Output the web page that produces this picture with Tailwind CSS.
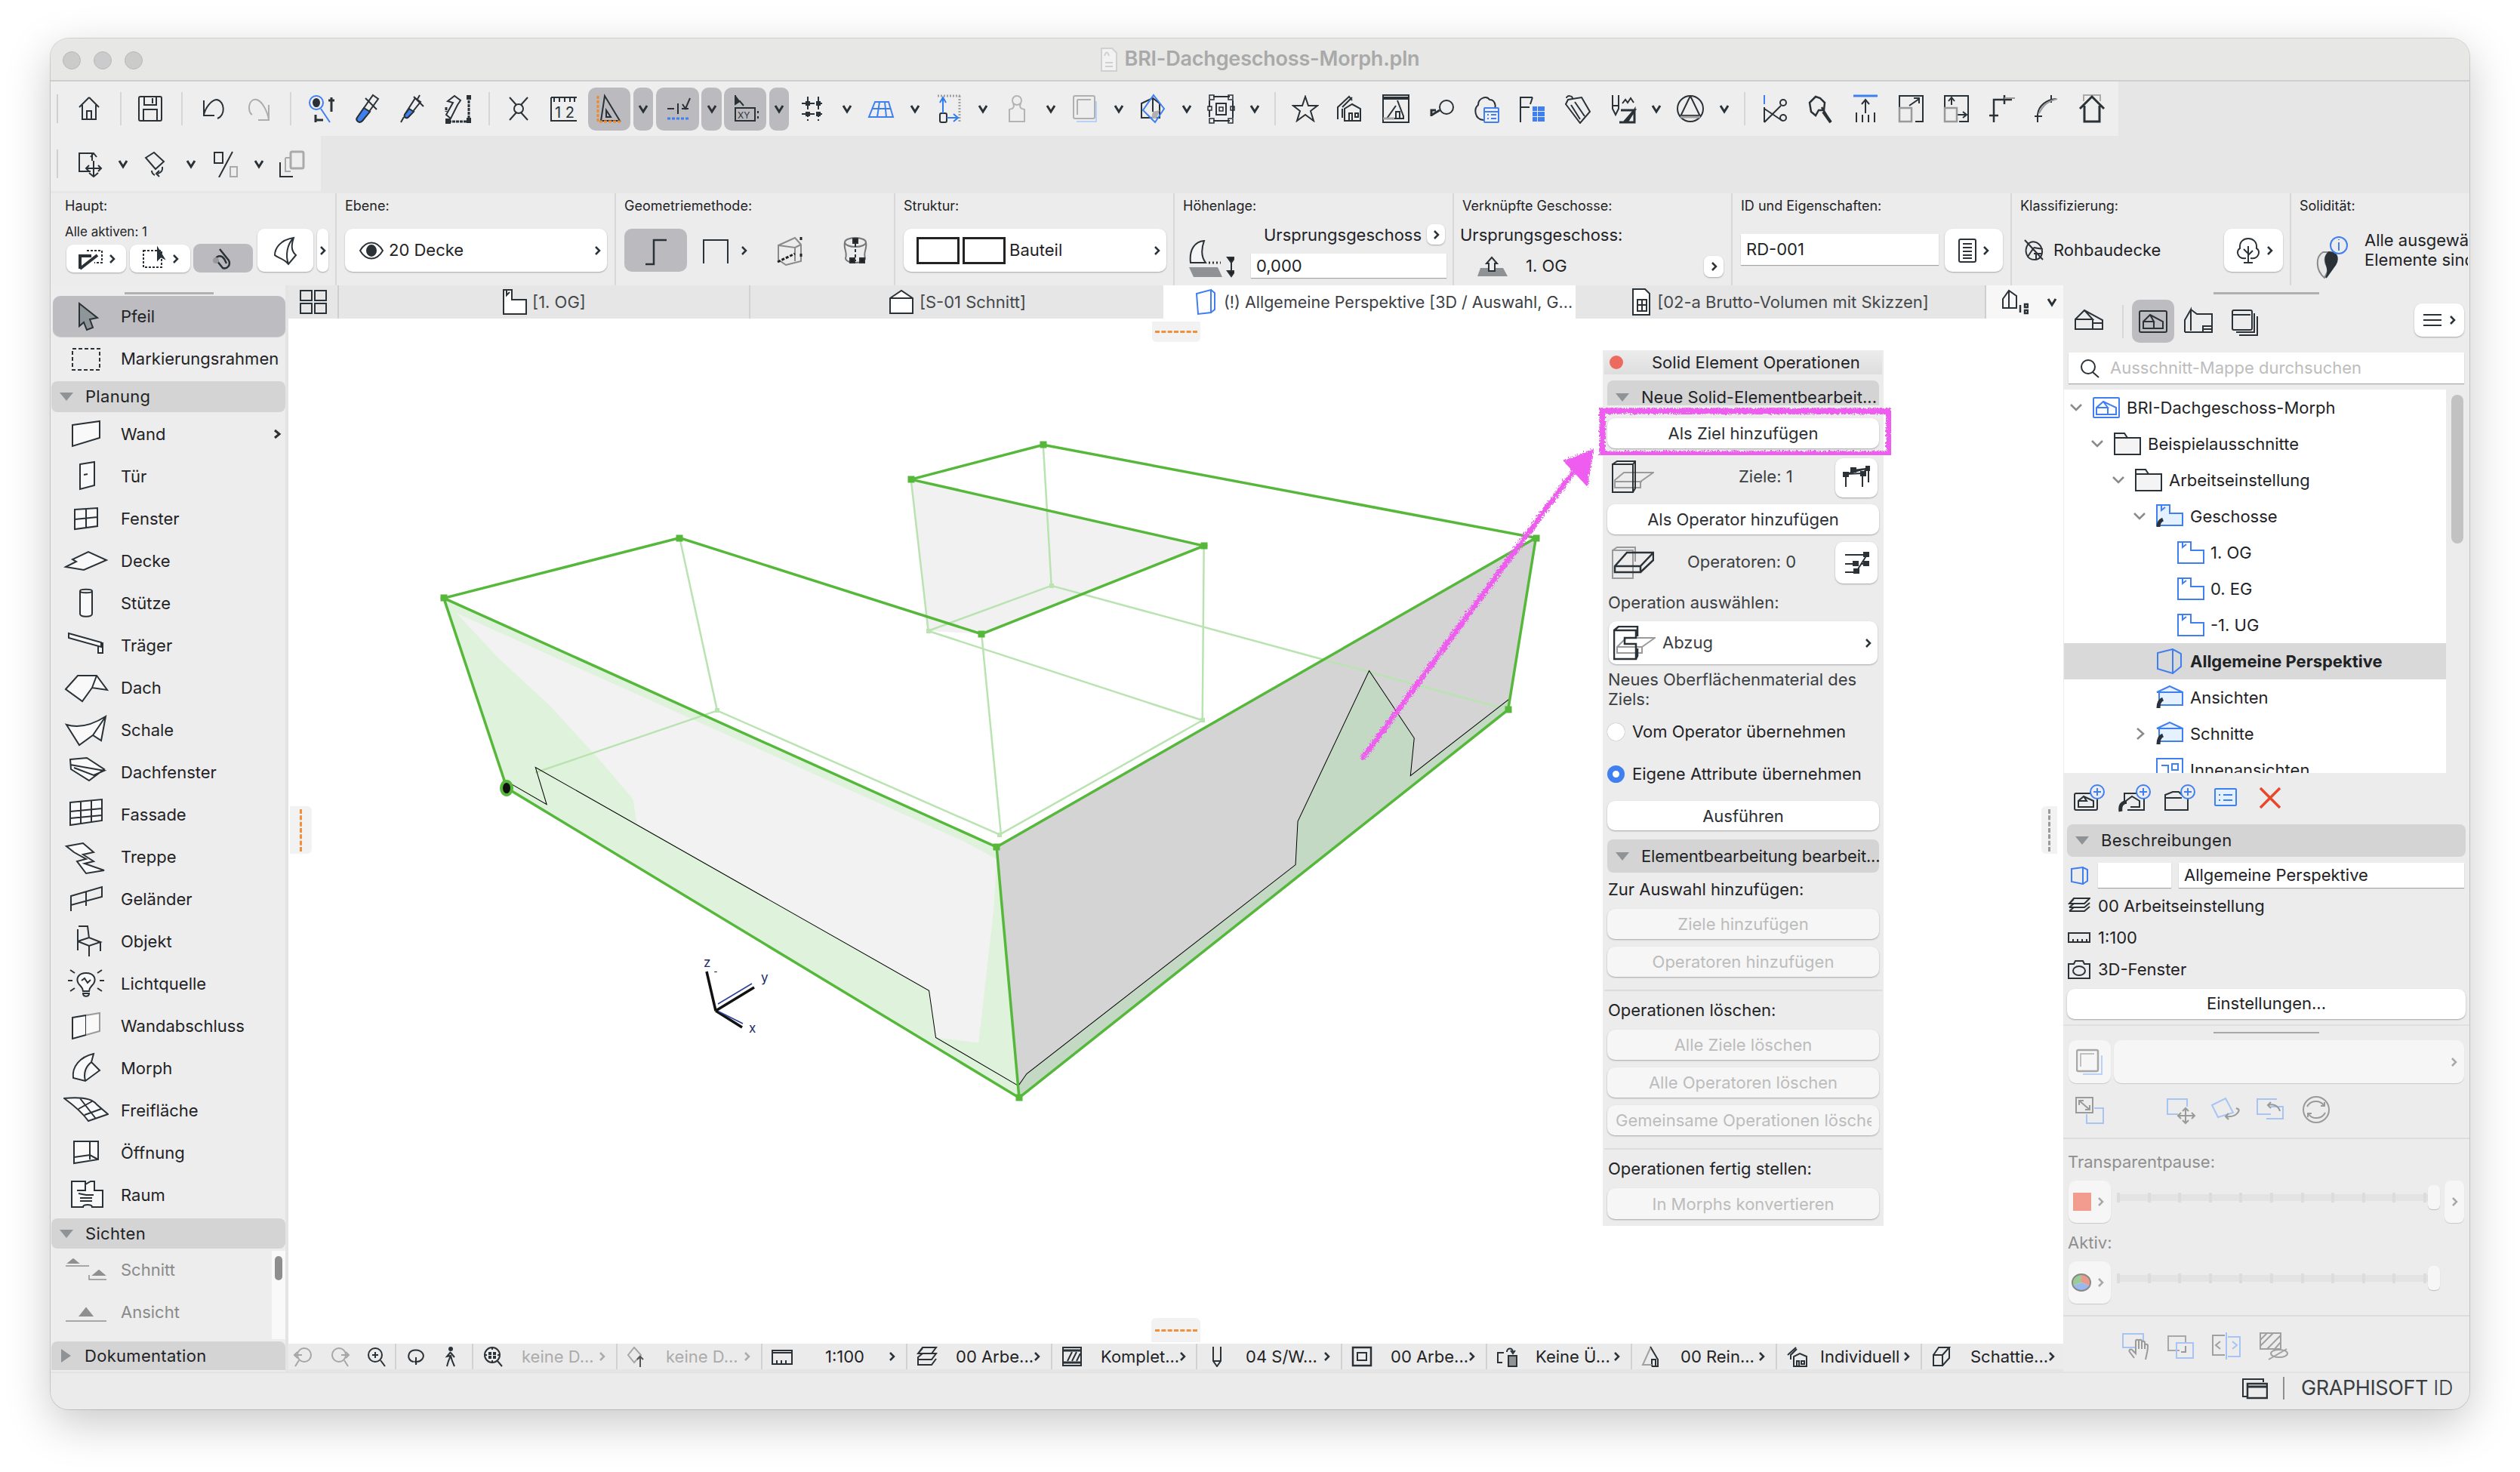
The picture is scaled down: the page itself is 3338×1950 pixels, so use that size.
<!DOCTYPE html>
<html lang="de">
<head>
<meta charset="UTF-8">
<title>BRI-Dachgeschoss-Morph.pln</title>
<script src="https://cdn.jsdelivr.net/npm/@tailwindcss/browser@4"></script>
</head>
<body class="bg-white w-[3338px] h-[1950px] overflow-hidden [font-family:Inter,'Liberation_Sans',sans-serif] text-[#1f2326] text-[22px]">
<div class="ml-[67px] mt-[51px] w-[3204px] h-[1816px] rounded-[24px] overflow-hidden flex flex-col bg-[#e6e6e6] shadow-[0_18px_60px_rgba(0,0,0,0.22),0_0_0_1px_rgba(0,0,0,0.14)] [&_svg]:fill-none [&_svg]:stroke-[#2a3238] [&_svg]:stroke-2 [&_svg]:shrink-0">

  <!-- title bar -->
  <div class="relative h-[57px] bg-[#e7e7e5] border-b-2 border-[#cfcfcf] flex items-center justify-center gap-[10px] shrink-0">
    <div class="absolute left-[16px] top-[17px] flex gap-[17px]">
      <div class="size-[24px] rounded-full bg-[#cbcbcb] border border-[#b9b9b9]"></div>
      <div class="size-[24px] rounded-full bg-[#cbcbcb] border border-[#b9b9b9]"></div>
      <div class="size-[24px] rounded-full bg-[#cbcbcb] border border-[#b9b9b9]"></div>
    </div>
    <svg class="w-[22px] h-[32px]" viewBox="0 0 22 32"><g stroke="#d0d0d0"><path d="M1 1H15L21 7V31H1Z" fill="#f2f2f2"/><path d="M5 11C7 5 9 5 11 11M6 20h10M6 25h10"/></g></svg>
    <span class="text-[#a9a9a9] font-semibold text-[27px] tracking-[-0.2px]">BRI-Dachgeschoss-Morph.pln</span>
  </div>

  <!-- main toolbar -->
  <div class="h-[72px] w-[2739px] bg-[#eeeeee] flex items-center shrink-0 [&>div]:w-[60px] [&>div]:flex [&>div]:justify-center [&>span]:w-[30px] [&>span]:flex [&>span]:justify-center">
    <i class="w-[2px] h-[38px] bg-[#cfcfcf] ml-[8px] mr-[11px]"></i>
    <div><svg class="size-9" viewBox="0 0 36 36"><path d="M18 3L5 16M18 3L31 16M9 13V32H27V13M15 32V21H21V32"/></svg></div>
    <i class="w-[2px] h-[44px] bg-[#d6d6d6] ml-[11px] mr-[8px]"></i>
    <div><svg class="size-9" viewBox="0 0 36 36"><rect x="3" y="2" width="30" height="32" rx="2"/><path d="M10 2V13H26V2M21 4V11M9 34V19H27V34"/></svg></div>
    <i class="w-[2px] h-[44px] bg-[#d6d6d6] ml-[11px] mr-[11px]"></i>
    <div><svg class="size-9" viewBox="0 0 36 36"><path d="M5 7V27H19M5 27C6 18 15 6 22 6C33 8 34 27 23 31"/></svg></div>
    <div><svg class="size-9" viewBox="0 0 36 36"><g stroke="#adadad"><path d="M31 13V33H17M31 33C30 24 23 8 15 6C4 4 2 22 9 26"/></g></svg></div>
    <i class="w-[2px] h-[44px] bg-[#d6d6d6] ml-[11px] mr-[10px]"></i>
    <div><svg class="size-10" viewBox="0 0 40 40"><circle cx="13" cy="12" r="9" stroke="#3f7ff0"/><ellipse cx="13" cy="12" rx="4" ry="5" fill="#2a3238"/><path d="M19 20L31 38" stroke="#3f7ff0"/><path d="M33 5V24M29 9H37M12 28V38M12 35H22" stroke-width="3"/></svg></div>
    <div><svg class="size-10" viewBox="0 0 40 40"><path d="M28 2L35 7L14 36C10 40 5 36 7 32Z"/><path d="M7 32L16 19L24 24L14 36C10 40 5 36 7 32Z" fill="#3f7ff0"/><path d="M18 6L33 21"/></svg></div>
    <div><svg class="size-10" viewBox="0 0 40 40"><path d="M24 6L31 11L15 31C12 34 9 31 10 28Z"/><path d="M10 28L16 20L22 24L15 31C12 34 9 31 10 28Z" fill="#3f7ff0"/><path d="M9 31L5 38M22 4L35 17M30 2L26 9"/></svg></div>
    <div><svg class="size-10" viewBox="0 0 40 40"><path d="M7 10L16 3L24 9L20 15L11 33L5 28L14 12Z"/><path d="M35 4V36M8 37H35M5 18V24" stroke-dasharray="4 1" stroke-width="3"/><rect x="33" y="3" width="4" height="4" fill="#2a3238"/><rect x="33" y="33" width="4" height="5" fill="#2a3238"/><rect x="5" y="34" width="5" height="5" fill="#2a3238"/></svg></div>
    <i class="w-[2px] h-[44px] bg-[#d6d6d6] ml-[11px] mr-[8px]"></i>
    <div><svg class="size-9" viewBox="0 0 36 36"><circle cx="18" cy="18" r="6"/><path d="M6 3L15 13M30 3L21 13M6 33L15 23M30 33L21 23"/></svg></div>
    <div><svg class="size-9" viewBox="0 0 36 36"><path d="M1 3H35M5 3V9M12 3V9M19 3V9M26 3V9M32 3V9M1 3V34H35"/><text x="6" y="30" font-size="20" font-family="Inter" fill="#2a3238" stroke="none">1 2</text></svg></div>
    <div class="!w-[56px] h-[57px] ml-[2px] rounded-[10px] bg-[#bbbbbf] items-center"><svg class="size-10" viewBox="0 0 40 40"><path d="M14 3L34 36H9Z M16 22V31H22Z"/><path d="M5 3V37H35" stroke="#ee8a2e" stroke-dasharray="4 2" stroke-width="3"/></svg></div>
    <span class="!w-[26px] h-[57px] ml-[4px] rounded-[9px] bg-[#bbbbbf] items-center"><svg class="size-[14px]" viewBox="0 0 14 14"><path d="M2 3L7 11L12 3" stroke-width="3"/></svg></span>
    <div class="!w-[57px] h-[57px] ml-[4px] rounded-[10px] bg-[#bbbbbf] items-center"><svg class="size-10" viewBox="0 0 40 40"><path d="M6 20H15M25 20H34M20 13V27M26 14L30 20L36 6"/><path d="M6 33H34" stroke="#3f7ff0" stroke-dasharray="4 2" stroke-width="3"/></svg></div>
    <span class="!w-[27px] h-[57px] ml-[3px] rounded-[9px] bg-[#bbbbbf] items-center"><svg class="size-[14px]" viewBox="0 0 14 14"><path d="M2 3L7 11L12 3" stroke-width="3"/></svg></span>
    <div class="!w-[56px] h-[57px] ml-[3px] rounded-[10px] bg-[#bbbbbf] items-center"><svg class="size-10" viewBox="0 0 40 40"><path d="M7 2L7 14L13 10L18 16" fill="#2a3238"/><rect x="7" y="19" width="26" height="17"/><text x="10" y="33" font-size="12" font-family="Inter" fill="#2a3238" stroke="none">XY</text><path d="M37 23V26M37 30V33"/></svg></div>
    <span class="!w-[26px] h-[57px] ml-[4px] rounded-[9px] bg-[#bbbbbf] items-center"><svg class="size-[14px]" viewBox="0 0 14 14"><path d="M2 3L7 11L12 3" stroke-width="3"/></svg></span>
    <div class="ml-[2px]"><svg class="size-9" viewBox="0 0 36 36"><path d="M3 11H33M3 25H33M11 2V34M25 2V34" stroke-dasharray="7 3"/><path d="M9 9h4v4h-4zM23 9h4v4h-4zM9 23h4v4h-4zM23 23h4v4h-4z" fill="#2a3238"/></svg></div>
    <span><svg class="size-[14px]" viewBox="0 0 14 14"><path d="M2 3L7 11L12 3" stroke-width="3"/></svg></span>
    <div><svg class="size-9" viewBox="0 0 36 36"><g stroke="#3f7ff0"><path d="M10 9H28L34 29H2Z M16 9L13 29M23 9L25 29M6 18H31"/></g></svg></div>
    <span><svg class="size-[14px]" viewBox="0 0 14 14"><path d="M2 3L7 11L12 3" stroke-width="3"/></svg></span>
    <div><svg class="size-10" viewBox="0 0 40 40"><path d="M5 3H35M34 3V38" stroke="#a0a0a0" stroke-dasharray="2 2" stroke-width="3"/><rect x="8" y="26" width="9" height="12" rx="2"/><path d="M12 26V6M8 12L12 5L16 12M17 32H30M26 27L32 32L26 37" stroke="#2f7df0" fill="none"/></svg></div>
    <span><svg class="size-[14px]" viewBox="0 0 14 14"><path d="M2 3L7 11L12 3" stroke-width="3"/></svg></span>
    <div><svg class="size-10" viewBox="0 0 40 40"><g stroke="#b3b3b3"><circle cx="20" cy="9" r="6"/><path d="M15 13C17 17 16 20 10 21V37H30V21C24 20 23 17 25 13"/></g></svg></div>
    <span><svg class="size-[14px]" viewBox="0 0 14 14"><path d="M2 3L7 11L12 3" stroke-width="3"/></svg></span>
    <div><svg class="size-10" viewBox="0 0 40 40"><rect x="5" y="3" width="28" height="30" rx="2" stroke="#b0b0b0"/><path d="M10 8H28M10 8V28" stroke="#b0b0b0"/><path d="M9 37H35V10" stroke="#b9d0f7"/></svg></div>
    <span><svg class="size-[14px]" viewBox="0 0 14 14"><path d="M2 3L7 11L12 3" stroke-width="3"/></svg></span>
    <div><svg class="size-10" viewBox="0 0 40 40"><path d="M5 13L20 6L29 13V32H5Z M20 6V24"/><path d="M20 24L29 22L25 33H18Z" fill="#b0b0b0" stroke="none"/><path d="M21 2L35 20L23 38L7 22Z" stroke="#3f7ff0"/></svg></div>
    <span><svg class="size-[14px]" viewBox="0 0 14 14"><path d="M2 3L7 11L12 3" stroke-width="3"/></svg></span>
    <div><svg class="size-10" viewBox="0 0 40 40"><path d="M10 4H32M10 36H32M5 9V18M5 22V31M36 9V32M14 13H27V28H14Z"/><path d="M5 2h6v6h-6zM30 2h6v6h-6zM5 33h6v6h-6zM30 33h6v6h-6zM3 17h5v5h-5zM33 17h5v5h-5zM18 18h5v5h-5z" stroke-width="1.5"/></svg></div>
    <span><svg class="size-[14px]" viewBox="0 0 14 14"><path d="M2 3L7 11L12 3" stroke-width="3"/></svg></span>
    <i class="w-[2px] h-[44px] bg-[#d6d6d6] ml-[11px] mr-[9px]"></i>
    <div><svg class="size-9" viewBox="0 0 36 36"><path d="M18 2L22 14H34L25 21L29 34L18 26L7 34L11 21L2 14H14Z"/></svg></div>
    <div><svg class="size-10" viewBox="0 0 40 40"><path d="M3 34V18L18 4L22 9M9 20V32M9 18L22 5"/><path d="M12 36V20L22 14L33 20V36Z"/><path d="M18 36V26H22V36M26 26H30V31H26Z"/></svg></div>
    <div><svg class="size-10" viewBox="0 0 40 40"><rect x="3" y="2" width="34" height="36"/><path d="M3 6H37" stroke-width="4"/><path d="M22 9L30 30V33H8L20 16" /><path d="M20 33V24H25V33"/><path d="M3 33H18" stroke="#a0a0a0" stroke-width="3"/></svg></div>
    <div><svg class="size-9" viewBox="0 0 36 36"><circle cx="25" cy="16" r="9"/><path d="M16 20L6 26M11 20H5V28" stroke-width="3"/></svg></div>
    <div><svg class="size-10" viewBox="0 0 40 40"><path d="M16 35C4 34 3 20 9 15C9 6 20 2 24 8C30 8 33 14 31 20"/><rect x="17" y="19" width="19" height="19" rx="1" stroke="#3f7ff0"/><path d="M17 24H36M21 28H23M26 28H33M21 33H23M26 33H33" stroke="#3f7ff0"/></svg></div>
    <div><svg class="size-10" viewBox="0 0 40 40"><path d="M5 38V5H21M5 18H17M21 5L18 14"/><path d="M22 18h4v4h-4zM29 18h7v4h-7zM22 25h4v4h-4zM29 25h7v4h-7zM22 32h4v4h-4zM29 32h7v4h-7z" fill="#3f7ff0" stroke="#3f7ff0"/></svg></div>
    <div><svg class="size-10" viewBox="0 0 40 40"><path d="M8 8L26 5L37 24L24 39L5 14Z M12 15L24 34M17 11L30 30M6 6C6 2 14 2 14 7"/></svg></div>
    <div><svg class="size-10" viewBox="0 0 40 40"><path d="M7 2V20L11 28L15 20V2M7 16H15"/><path d="M20 13L24 8L27 12L31 6L35 12" stroke="#2a3238"/><path d="M18 22H36L22 38M36 22L26 38H36ZM16 38H36" stroke-width="3"/></svg></div>
    <span><svg class="size-[14px]" viewBox="0 0 14 14"><path d="M2 3L7 11L12 3" stroke-width="3"/></svg></span>
    <div><svg class="size-10" viewBox="0 0 40 40"><circle cx="20" cy="20" r="17"/><path d="M20 3L33 30M20 3L7 30M5 29H35"/><path d="M7 31H33" stroke="#a0a0a0" stroke-width="3"/></svg></div>
    <span><svg class="size-[14px]" viewBox="0 0 14 14"><path d="M2 3L7 11L12 3" stroke-width="3"/></svg></span>
    <i class="w-[2px] h-[44px] bg-[#d6d6d6] ml-[11px] mr-[9px]"></i>
    <div><svg class="size-10" viewBox="0 0 40 40"><path d="M6 2V14" stroke="#3f7ff0"/><path d="M6 18V38M6 20L30 36M6 38L28 16"/><circle cx="31" cy="12" r="4"/><circle cx="31" cy="32" r="4"/></svg></div>
    <div><svg class="size-10" viewBox="0 0 40 40"><path d="M14 4L6 12L8 24L14 29L18 22L25 22L26 12L20 6Z M22 18L34 38" stroke-width="2.5"/><path d="M24 24L34 38" stroke-width="4"/></svg></div>
    <div><svg class="size-10" viewBox="0 0 40 40"><path d="M4 3H36" stroke="#3f7ff0" stroke-width="3"/><path d="M20 9V26M15 14L20 8L25 14M8 25V38M16 28V38M24 28V38M32 25V38"/></svg></div>
    <div><svg class="size-10" viewBox="0 0 40 40"><path d="M5 18V3H36V37H26M18 16L31 7M24 6H31V13"/><rect x="5" y="19" width="16" height="18" stroke="#999" stroke-width="2.5"/></svg></div>
    <div><svg class="size-10" viewBox="0 0 40 40"><path d="M5 18V3H36V37H24M14 15V6M10 10L14 5L18 10M22 28H33M29 24L34 28L29 32"/><rect x="5" y="19" width="16" height="18" stroke="#999" stroke-width="2.5"/></svg></div>
    <div><svg class="size-10" viewBox="0 0 40 40"><path d="M10 38V8H34M24 2V14M4 29H16" stroke-width="2.5"/><path d="M24 6H38" stroke="#999"/></svg></div>
    <div><svg class="size-10" viewBox="0 0 40 40"><path d="M8 38V28C9 16 20 8 32 7M26 2V12M4 30H14" stroke-width="2"/><path d="M10 26C16 14 22 10 34 7" stroke="#999"/></svg></div>
    <div><svg class="size-10" viewBox="0 0 40 40"><path d="M9 10V2H31V10" stroke="#aaa"/><path d="M4 20L20 4L36 20M10 16V37H30V16" stroke-width="3"/></svg></div>
  </div>

  <!-- second toolbar -->
  <div class="h-[73px] w-[358px] bg-[#eeeeee] flex items-center shrink-0">
    <i class="w-[2px] h-[38px] bg-[#cfcfcf] ml-[8px]"></i>
    <div class="ml-[25px] w-[36px]"><svg class="size-9" viewBox="0 0 36 36"><path d="M18 28H3V4H20V14" /><path d="M22 14V34M12 24H32M18 9L22 4L26 9" transform="translate(0 0)"/><path d="M16 30L22 35L28 30M16 20L12 24L16 28M28 20L32 24L28 28"/></svg></div>
    <svg class="size-[14px] ml-[18px]" viewBox="0 0 14 14"><path d="M2 3L7 11L12 3" stroke-width="3"/></svg>
    <svg class="size-9 ml-[19px]" viewBox="0 0 36 36"><path d="M4 10L15 3L28 15L17 25Z"/><path d="M26 22C27 28 24 30 20 31M22 35L18 31L22 27M12 27C12 30 14 32 16 33" stroke-width="2"/></svg>
    <svg class="size-[14px] ml-[21px]" viewBox="0 0 14 14"><path d="M2 3L7 11L12 3" stroke-width="3"/></svg>
    <svg class="size-9 ml-[21px]" viewBox="0 0 36 36"><path d="M27 2L9 36"/><rect x="3" y="3" width="11" height="14"/><rect x="24" y="22" width="9" height="13" stroke="#aaa"/></svg>
    <svg class="size-[14px] ml-[19px]" viewBox="0 0 14 14"><path d="M2 3L7 11L12 3" stroke-width="3"/></svg>
    <svg class="size-9 ml-[18px]" viewBox="0 0 36 36"><rect x="17" y="2" width="17" height="22" rx="2" stroke="#aaa" stroke-width="3"/><path d="M10 10H16M10 10V28H17" stroke="#aaa"/><path d="M3 16V35H20"/></svg>
  </div>

  <!-- info box -->
  <div class="h-[122px] mt-[3px] flex bg-[#ececec] shrink-0 text-[18px] [&>section]:w-[370px] [&>section]:relative [&>section]:border-r-2 [&>section]:border-[#d8d8d8] [&>section]:pl-[11px]">
    <section class="!w-[379px] !pl-[19px]">
      <div class="mt-[5px] leading-[24px]">Haupt:</div>
      <div class="mt-[10px] text-[17px] leading-[24px]">Alle aktiven: 1</div>
      <div class="absolute left-[21px] top-[68px] w-[79px] h-[37px] bg-white rounded-[9px] shadow-[0_1px_2px_rgba(0,0,0,0.3)] flex items-center justify-center gap-[7px]"><svg class="size-[34px]" viewBox="0 0 34 34"><path d="M12 6H32V22H22" stroke-dasharray="3 2"/><path d="M3 30V13H18M3 30L26 12" stroke-width="4"/></svg><svg class="w-[9px] h-[14px]" viewBox="0 0 9 14"><path d="M2 2L7 7L2 12" stroke-width="2.5"/></svg></div>
      <div class="absolute left-[105px] top-[68px] w-[80px] h-[37px] bg-white rounded-[9px] shadow-[0_1px_2px_rgba(0,0,0,0.3)] flex items-center justify-center gap-[7px]"><svg class="size-[34px]" viewBox="0 0 34 34"><rect x="3" y="6" width="24" height="22" stroke-dasharray="3 2"/><path d="M22 3V18L26 14L30 16Z" fill="#2a3238"/></svg><svg class="w-[9px] h-[14px]" viewBox="0 0 9 14"><path d="M2 2L7 7L2 12" stroke-width="2.5"/></svg></div>
      <div class="absolute left-[189px] top-[67px] w-[79px] h-[38px] bg-[#bbbbbf] rounded-[9px] flex items-center justify-center"><svg class="size-[34px]" viewBox="0 0 34 34"><path d="M12 5L24 20C27 26 22 32 16 30L8 20C5 14 14 12 18 18L21 24" stroke-width="2.5"/><circle cx="7" cy="20" r="4" fill="#999" stroke="none"/></svg></div>
      <div class="absolute left-[274px] top-[47px] w-[74px] h-[57px] bg-white rounded-[9px] shadow-[0_1px_2px_rgba(0,0,0,0.3)] flex items-center justify-center"><svg class="size-10" viewBox="0 0 40 40"><path d="M6 26C6 18 12 6 31 3C28 12 27 20 34 26L24 38C18 30 10 30 6 26Z M31 3C22 12 20 26 24 38"/></svg></div>
      <div class="absolute left-[353px] top-[47px] w-[15px] h-[57px] bg-white rounded-[7px] shadow-[0_1px_2px_rgba(0,0,0,0.3)] flex items-center justify-center"><svg class="w-[9px] h-[14px]" viewBox="0 0 9 14"><path d="M2 2L7 7L2 12" stroke-width="2.5"/></svg></div>
    </section>
    <section>
      <div class="mt-[5px] leading-[24px] mb-[18px]">Ebene:</div>
      <div class="w-[347px] h-[57px] bg-white rounded-[10px] shadow-[0_1px_2px_rgba(0,0,0,0.3)] flex items-center pl-[18px] pr-[8px] text-[22px]"><svg class="w-[34px] h-[24px] mr-[6px]" viewBox="0 0 34 24"><path d="M2 12C10 -2 24 -2 32 12C24 26 10 26 2 12Z"/><ellipse cx="17" cy="12" rx="6" ry="7" fill="#2a3238"/></svg><span>20 Decke</span><svg class="w-[9px] h-[14px] ml-auto" viewBox="0 0 9 14"><path d="M2 2L7 7L2 12" stroke-width="2.5"/></svg></div>
    </section>
    <section>
      <div class="mt-[5px] leading-[24px] mb-[18px]">Geometriemethode:</div>
      <div class="flex items-center h-[57px]">
        <div class="w-[83px] h-[57px] bg-[#bbbbbf] rounded-[10px] flex items-center justify-center"><svg class="size-10" viewBox="0 0 40 40"><path d="M6 38H17V6H34" stroke-width="2.5"/></svg></div>
        <svg class="size-[34px] ml-[21px]" viewBox="0 0 34 34"><rect x="1" y="3" width="32" height="32"/></svg>
        <svg class="w-[9px] h-[14px] ml-[16px]" viewBox="0 0 9 14"><path d="M2 2L7 7L2 12" stroke-width="2.5"/></svg>
        <svg class="size-10 ml-[35px]" viewBox="0 0 40 40"><g stroke="#8a8a8a"><path d="M6 13L28 3L36 12V34L16 39L6 32Z M6 13L28 16L36 12 M28 16V34"/></g><path d="M36 2V6M36 24V30M5 35L28 24" stroke="#222" stroke-dasharray="4 2" stroke-width="3"/></svg>
        <svg class="size-10 ml-[48px]" viewBox="0 0 40 40"><ellipse cx="20" cy="9" rx="14" ry="6" stroke="#777"/><path d="M6 9C4 18 10 22 7 30C7 38 33 38 33 30C30 22 36 18 34 9" stroke="#777"/><path d="M20 4V34" stroke-dasharray="4 3"/><rect x="17" y="4" width="6" height="6" fill="#222"/><rect x="13" y="30" width="6" height="6" fill="#222"/><rect x="26" y="30" width="6" height="6" fill="#222"/></svg>
      </div>
    </section>
    <section>
      <div class="mt-[5px] leading-[24px] mb-[18px]">Struktur:</div>
      <div class="w-[348px] h-[57px] bg-white rounded-[10px] shadow-[0_1px_2px_rgba(0,0,0,0.3)] flex items-center pl-[17px] pr-[8px] text-[22px]"><div class="w-[57px] h-[36px] border-[3px] border-[#222]"></div><div class="w-[57px] h-[36px] border-[3px] border-[#222] ml-[4px] mr-[5px]"></div><span>Bauteil</span><svg class="w-[9px] h-[14px] ml-auto" viewBox="0 0 9 14"><path d="M2 2L7 7L2 12" stroke-width="2.5"/></svg></div>
    </section>
    <section>
      <div class="mt-[5px] leading-[24px]">Höhenlage:</div>
      <svg class="absolute left-[17px] top-[62px] w-[62px] h-[50px]" viewBox="0 0 62 50"><path d="M4 30C2 12 10 2 22 1C18 12 18 22 24 30Z" fill="#f5f5f5"/><path d="M2 36H40L46 49H8Z" fill="#8f9294" stroke="none"/><path d="M28 30H44" stroke-dasharray="2 3" stroke-width="3"/><path d="M58 26V47" /><path d="M53 23H63L58 30ZM53 41H63L58 48Z" fill="#222"/></svg>
      <div class="absolute left-[118px] top-[41px] text-[22px] leading-[28px] whitespace-nowrap">Ursprungsgeschoss</div>
      <div class="absolute left-[334px] top-[41px] w-[24px] h-[27px] bg-white rounded-[8px] shadow-[0_1px_2px_rgba(0,0,0,0.3)] flex items-center justify-center"><svg class="w-[9px] h-[14px]" viewBox="0 0 9 14"><path d="M2 2L7 7L2 12" stroke-width="2.5"/></svg></div>
      <div class="absolute left-[101px] top-[80px] w-[259px] h-[32px] bg-white shadow-[0_1px_1px_rgba(0,0,0,0.3)] text-[22px] leading-[32px] pl-[7px]">0,000</div>
    </section>
    <section class="!w-[369px]">
      <div class="mt-[5px] leading-[24px]">Verknüpfte Geschosse:</div>
      <div class="absolute left-[8px] top-[41px] text-[22px] leading-[28px]">Ursprungsgeschoss:</div>
      <svg class="absolute left-[29px] top-[83px] w-[44px] h-[28px]" viewBox="0 0 44 28"><path d="M6 16H36L42 27H2Z" fill="#8f9294" stroke="none"/><path d="M21 2L28 10H25V20H17V10H14Z" fill="#ececec"/></svg>
      <div class="absolute left-[95px] top-[82px] text-[22px] leading-[28px]">1. OG</div>
      <div class="absolute left-[331px] top-[83px] w-[26px] h-[28px] bg-white rounded-[8px] shadow-[0_1px_2px_rgba(0,0,0,0.3)] flex items-center justify-center"><svg class="w-[9px] h-[14px]" viewBox="0 0 9 14"><path d="M2 2L7 7L2 12" stroke-width="2.5"/></svg></div>
    </section>
    <section>
      <div class="mt-[5px] leading-[24px]">ID und Eigenschaften:</div>
      <div class="absolute left-[11px] top-[54px] w-[262px] h-[41px] bg-white shadow-[0_1px_1px_rgba(0,0,0,0.3)] text-[22px] leading-[40px] pl-[7px]">RD-001</div>
      <div class="absolute left-[281px] top-[47px] w-[77px] h-[57px] bg-white rounded-[10px] shadow-[0_1px_2px_rgba(0,0,0,0.3)] flex items-center justify-center gap-[8px]"><svg class="w-[24px] h-[32px]" viewBox="0 0 24 32"><rect x="1" y="1" width="22" height="30" rx="2"/><path d="M6 7H18M6 12H18M6 17H18M6 22H18M6 26H18"/></svg><svg class="w-[9px] h-[14px]" viewBox="0 0 9 14"><path d="M2 2L7 7L2 12" stroke-width="2.5"/></svg></div>
    </section>
    <section>
      <div class="mt-[5px] leading-[24px]">Klassifizierung:</div>
      <svg class="absolute left-[14px] top-[60px] size-[30px]" viewBox="0 0 30 30"><path d="M3 2L27 28M7 8C2 16 5 28 16 28C24 28 29 20 24 10C20 4 12 2 7 8ZM15 12L7 24M15 12L27 14M15 20H26M18 20V28"/></svg>
      <div class="absolute left-[55px] top-[61px] text-[22px] leading-[28px]">Rohbaudecke</div>
      <div class="absolute left-[281px] top-[47px] w-[78px] h-[57px] bg-white rounded-[10px] shadow-[0_1px_2px_rgba(0,0,0,0.3)] flex items-center justify-center gap-[6px]"><svg class="size-9" viewBox="0 0 36 36"><path d="M15 28C4 30 1 18 7 15C6 6 12 2 18 2C24 2 30 6 29 15C35 18 32 30 21 28M18 12V34M12 34H24M18 22L12 16M18 24L24 18"/></svg><svg class="w-[9px] h-[14px]" viewBox="0 0 9 14"><path d="M2 2L7 7L2 12" stroke-width="2.5"/></svg></div>
    </section>
    <section class="!w-[234px] !border-r-0 overflow-hidden">
      <div class="mt-[5px] leading-[24px]">Solidität:</div>
      <svg class="absolute left-[30px] top-[54px] w-[50px] h-[60px]" viewBox="0 0 50 60"><path d="M12 24C2 30 2 48 14 58L20 46C14 40 12 32 20 24Z" fill="#e8e8e8" stroke="#888"/><path d="M20 24C32 24 34 34 26 44L16 58C24 44 8 34 20 24Z" fill="#2a3238"/><circle cx="33" cy="15" r="11" fill="#ececec" stroke="#3f7ff0"/><path d="M33 11V22M33 7V8" stroke="#3f7ff0"/></svg>
      <div class="absolute left-[97px] top-[49px] text-[22px] leading-[26px] whitespace-nowrap">Alle ausgewählten<br>Elemente sind</div>
    </section>
  </div>

  <!-- work area -->
  <div class="flex h-[1439px] shrink-0">

    <!-- toolbox -->
    <div class="relative w-[315px] shrink-0 bg-[#ededed] border-r-[4px] border-[#e4e4e4] text-[22px]">
      <div class="w-[118px] h-[3px] bg-[#b0b0b0] ml-[98px] mt-[9px] mb-[2px]"></div>
      <div class="ml-[3px] w-[308px] h-[54px] rounded-[10px] bg-[#bcbcc1] shadow-[0_1px_1px_rgba(0,0,0,0.15)] flex items-center">
        <div class="w-[90px] flex justify-center"><svg class="size-10" viewBox="0 0 40 40"><path d="M10 3L34 22L24 24L28 35L20 38L16 28L10 33Z" fill="#8f969a"/></svg></div><span>Pfeil</span>
      </div>
      <div class="flex items-center h-[59px]"><div class="w-[93px] flex justify-center"><svg class="w-[40px] h-[32px]" viewBox="0 0 40 32"><rect x="2" y="2" width="36" height="28" stroke-dasharray="5 3"/></svg></div><span>Markierungsrahmen</span></div>
      <div class="ml-[1px] w-[310px] h-[41px] rounded-[8px] bg-[#d4d4d4] flex items-center"><div class="w-0 h-0 border-x-[9px] border-x-transparent border-t-[11px] border-t-[#8f9396] ml-[11px] mr-[16px]"></div><span class="tracking-[0.3px]">Planung</span></div>
      <div class="mt-[1px] [&>div]:flex [&>div]:items-center [&>div]:h-[56px] [&>div>svg]:w-[60px] [&>div>svg]:h-[48px] [&>div>svg]:ml-[17px] [&>div>svg]:mr-[16px] [&_path]:fill-[#f9f9f9]">
        <div class="relative"><svg viewBox="0 0 60 48"><path d="M12 12L48 7V29L12 40Z"/></svg><span>Wand</span><svg class="!w-[11px] !h-[14px] !mx-0 absolute right-[5px]" viewBox="0 0 11 14"><path d="M2 2L8 7L2 12" stroke-width="3" class="!fill-none"/></svg></div>
        <div><svg viewBox="0 0 60 48"><path d="M22 8L41 5V36L22 41ZM27 22L32 21"/></svg><span>Tür</span></div>
        <div><svg viewBox="0 0 60 48"><path d="M15 12L45 10V34L15 38ZM30 11V36M15 25L45 22"/></svg><span>Fenster</span></div>
        <div><svg viewBox="0 0 60 48"><path d="M3 32L17 25L12 22L33 12L57 23L27 36Z"/></svg><span>Decke</span></div>
        <div><svg viewBox="0 0 60 48"><path d="M22 8C22 5 38 5 38 8V38C38 43 22 43 22 38ZM22 8C22 11 38 11 38 8"/></svg><span>Stütze</span></div>
        <div><svg viewBox="0 0 60 48"><path d="M7 8L50 20V26L7 14ZM7 8L7 14M46 24V34H52V20"/></svg><span>Träger</span></div>
        <div><svg viewBox="0 0 60 48"><path d="M3 26L19 8H44L58 27L38 24L25 42ZM44 8L38 24"/></svg><span>Dach</span></div>
        <div><svg viewBox="0 0 60 48"><path d="M4 17Q28 24 56 6L50 38L39 31L21 44ZM56 6L39 31"/></svg><span>Schale</span></div>
        <div><svg viewBox="0 0 60 48"><path d="M9 7L31 5L54 20L34 35L10 20ZM9 14L54 22L40 28L14 18"/></svg><span>Dachfenster</span></div>
        <div><svg viewBox="0 0 60 48"><path d="M9 8L51 4V32L9 38ZM9 20L51 16M9 29L51 25M23 7V36M37 5V34"/></svg><span>Fassade</span></div>
        <div><svg viewBox="0 0 60 48"><path d="M4 10L26 6L40 18L26 21L40 30L28 33L54 42L30 46L18 30L30 27L14 18Z"/></svg><span>Treppe</span></div>
        <div><svg viewBox="0 0 60 48"><path d="M10 20L51 8V21L10 32ZM10 20V40M30 14V33" class="!fill-none"/></svg><span>Geländer</span></div>
        <div><svg viewBox="0 0 60 48"><path d="M20 4H32L34 20M19 8V24L34 19L49 25L34 30L19 24M49 25V37M34 30V44M19 24V36" class="!fill-none"/></svg><span>Objekt</span></div>
        <div><svg viewBox="0 0 60 48"><path d="M30 10C20 10 16 17 20 24C23 28 26 29 26 34H34C34 29 37 28 40 24C44 17 40 10 30 10ZM26 37C26 42 34 42 34 37ZM24 20L28 17L32 23L36 19M12 20H6M48 20H54M15 10L9 6M45 10L51 6M15 30L9 34M45 30L51 34"/></svg><span>Lichtquelle</span></div>
        <div><svg viewBox="0 0 60 48"><path d="M12 13L30 10V36L12 41Z"/><path d="M30 10L48 7V31L30 36" stroke="#9a9a9a"/></svg><span>Wandabschluss</span></div>
        <div><svg viewBox="0 0 60 48"><path d="M13 37C11 22 22 9 40 5L37 16L48 27L29 41ZM37 16C27 24 27 33 29 41"/></svg><span>Morph</span></div>
        <div><svg viewBox="0 0 60 48"><path d="M1 8C22 6 38 8 44 16L59 29L33 38C26 28 12 16 1 8ZM22 8L43 35M38 12L20 22M28 30L50 22"/></svg><span>Freifläche</span></div>
        <div><svg viewBox="0 0 60 48"><path d="M14 9H46V33L14 38ZM35 9V33M14 30L35 27L46 33"/></svg><span>Öffnung</span></div>
        <div><svg viewBox="0 0 60 48"><path d="M11 6H29V10L36 6H41V18H52V40H38C38 36 26 36 26 40H11ZM29 10V18H18M20 22L30 24H40M22 28H38M22 32H38"/></svg><span>Raum</span></div>
      </div>
      <div class="mt-[3px] ml-[1px] w-[310px] h-[40px] rounded-[8px] bg-[#d4d4d4] flex items-center"><div class="w-0 h-0 border-x-[9px] border-x-transparent border-t-[11px] border-t-[#8f9396] ml-[11px] mr-[16px]"></div><span class="tracking-[0.3px]">Sichten</span></div>
      <div class="text-[#8a8a8a] [&>div]:flex [&>div]:items-center [&>div]:h-[56px] [&>div>svg]:w-[60px] [&>div>svg]:h-[30px] [&>div>svg]:ml-[17px] [&>div>svg]:mr-[16px]">
        <div><svg viewBox="0 0 60 30"><g stroke="#8f8f8f"><path d="M3 10H34M34 22V28H57" stroke-width="1.5"/><path d="M7 6L13 1L19 6Z M40 22L47 16L54 22Z" fill="#8f8f8f"/></g></svg><span>Schnitt</span></div>
        <div><svg viewBox="0 0 60 30"><g stroke="#8f8f8f"><path d="M3 27H57" stroke-width="1.5"/><path d="M22 20L30 10L38 20Z" fill="#8f8f8f"/></g></svg><span>Ansicht</span></div>
      </div>
      <div class="absolute left-[293px] top-[1279px] w-[18px] h-[117px] bg-[#f9f9f9]"><div class="mx-[4px] mt-[7px] h-[32px] rounded-[5px] bg-[#8e8e8e]"></div></div>
      <div class="mt-[11px] ml-[1px] w-[310px] h-[38px] rounded-t-[8px] bg-[#d4d4d4] flex items-center"><div class="w-0 h-0 border-y-[9px] border-y-transparent border-l-[13px] border-l-[#8f9396] ml-[13px] mr-[18px]"></div><span class="tracking-[0.3px]">Dokumentation</span></div>
    </div>

    <!-- centre -->
    <div class="flex flex-col w-[2351px] shrink-0">
      <!-- tabs -->
      <div class="h-[44px] flex bg-[#e6e6e6] text-[22px] text-[#44484b] shrink-0 [&>div]:flex [&>div]:items-center [&>div]:justify-center">
        <div class="w-[67px] border-r-2 border-[#cfcfcf]"><svg class="size-9" viewBox="0 0 36 36"><rect x="1" y="3" width="15" height="13"/><rect x="20" y="3" width="15" height="13"/><rect x="1" y="20" width="15" height="13"/><rect x="20" y="20" width="15" height="13"/></svg></div>
        <div class="w-[545px] border-r-2 border-[#d2d2d2] gap-[4px]"><svg class="size-9" viewBox="0 0 36 36"><path d="M2 2H13V15H32V34H2Z" fill="#fff"/><path d="M6 2V9L10 5"/></svg><span>[1. OG]</span></div>
        <div class="w-[547px] gap-[6px]"><svg class="size-9" viewBox="0 0 36 36"><path d="M3 13L18 3L33 13V33H3ZM3 13H33" fill="#fff"/></svg><span>[S-01 Schnitt]</span></div>
        <div class="w-[546px] bg-white !justify-start pl-[36px] gap-[8px] text-[#3c4043] text-[21.5px] whitespace-nowrap"><svg class="size-9" viewBox="0 0 36 36"><path d="M8 7L27 2V32L10 34ZM27 2L32 6V28L27 32" stroke="#3f7ff0"/></svg><span>(!) Allgemeine Perspektive [3D / Auswahl, G...</span></div>
        <div class="w-[544px] border-r-2 border-[#cfcfcf] gap-[8px]"><svg class="w-[26px] h-[36px]" viewBox="0 0 26 36"><path d="M2 1H18L24 7V35H2Z M8 15H20V30H8ZM8 22H20M14 15V30" fill="#fff"/></svg><span>[02-a Brutto-Volumen mit Skizzen]</span></div>
        <div class="w-[102px] bg-[#f7f7f7] !justify-start pl-[20px] gap-[24px]"><svg class="size-9" viewBox="0 0 36 36"><path d="M2 14L10 3L20 10V26H2ZM10 3V26"/><path d="M25 22V32M31 21h4v4h-4zM31 29h4v4h-4z" stroke-width="2.5"/></svg><svg class="size-[14px]" viewBox="0 0 14 14"><path d="M2 3L7 11L12 3" stroke-width="3"/></svg></div>
      </div>

      <!-- 3D canvas -->
      <div class="relative h-[1358px] bg-white shrink-0">
        <svg class="absolute inset-0 w-[2351px] h-[1358px]" viewBox="382 422 2351 1358">
          <defs><filter id="rough" x="-5%" y="-5%" width="110%" height="110%"><feTurbulence baseFrequency="0.35" numOctaves="2" seed="4"/><feDisplacementMap in="SourceGraphic" scale="6"/></filter></defs>
          <svg x="560" y="560" width="1560" height="920" viewBox="0 0 1568 1568" preserveAspectRatio="none" overflow="visible" class="[&_*]:[vector-effect:non-scaling-stroke]">
            <path d="M650 128L1040 278L744 477L673 470Z" fill="#f1f1f1" stroke="none"/>
            <path d="M28 396L764 958L794 1524L112 825Z" fill="#dff3dc" stroke="none"/>
            <path d="M45 430L100 530L170 640L240 770L280 850L285 905L674 1282L683 1388L740 1400L760 1100L764 985L720 945Z" fill="#f2f2f2" stroke="none"/>
            <path d="M764 958L1482 260L1445 648L794 1524Z" fill="#d4d4d4" stroke="none"/>
            <path d="M794 1497L804 1470L1162 998L1165 900L1260 560L1320 712L1315 797L1448 622L1445 648L794 1524Z" fill="#c3d9c3" stroke="none"/>
            <g stroke="#b9e3b0" stroke-width="2.5">
              <path d="M342 260L392 650M392 650L150 790M392 650L768 930M744 477L770 932M768 930L1038 672M1040 278L1038 672M826 50L837 368M837 368L673 470M650 128L673 470M673 470L1038 672M837 368L1445 648"/>
            </g>
            <g stroke="#000" stroke-width="1">
              <path d="M110 808L165 862L150 778L674 1282L683 1388L793 1497L804 1470L1162 998L1165 900L1260 560L1320 712L1315 797L1448 622"/>
            </g>
            <g stroke="#55b83a" stroke-width="3.5">
              <path d="M28 396L342 260L744 477L1040 278L650 128L826 50L1482 260L764 958Z"/>
              <path d="M28 396L112 825L794 1524L1445 648L1482 260M764 958L794 1524"/>
            </g>
          </svg>
          <g stroke="#55b83a" stroke-width="9" stroke-linecap="square"><path d="M588 792h.01M900 713h.01M1300 840h.01M1207 635h.01M1382 589h.01M2035 713h.01M1320 1122h.01M1595 723h.01M1350 1454h.01M1998 940h.01"/></g>
          <g stroke="#b9e3b0" stroke-width="6" stroke-linecap="square"><path d="M950 941h.01M1324 1106h.01M1593 954h.01M1393 776h.01M1230 836h.01"/></g>
          <ellipse cx="671" cy="1044" rx="7" ry="9" fill="#111" stroke="#55b83a" stroke-width="4"/>
          <g stroke="#111" stroke-width="3"><path d="M948 1288L948 1287M936 1287L948 1339M948 1339L999 1308M948 1339L983 1361" stroke-width="3.5"/></g>
          <path d="M951 1330L996 1303M952 1340L984 1356" stroke="#2a3f9a" stroke-width="1.5"/>
          <text x="932" y="1281" font-size="17" font-family="Inter" fill="#1c2a66" stroke="none">z</text>
          <text x="1008" y="1301" font-size="17" font-family="Inter" fill="#1c2a66" stroke="none">y</text>
          <text x="992" y="1368" font-size="17" font-family="Inter" fill="#1c2a66" stroke="none">x</text>
          <g stroke="#ee5cf0" filter="url(#rough)"><path d="M1804 1002L2085 620" stroke-width="7" stroke-linecap="round"/><path d="M2108 595L2072 610L2100 640Z" fill="#ee5cf0" stroke-width="3"/></g>
        </svg>
        <!-- canvas handles -->
        <div class="absolute left-[1144px] top-[4px] w-[64px] h-[27px] bg-[#f2f2f2] rounded-b-[6px] flex items-center justify-center"><div class="w-[56px] border-t-[3px] border-dashed border-[#f0903c]"></div></div>
        <div class="absolute left-[1143px] top-[1324px] w-[65px] h-[32px] bg-[#f2f2f2] rounded-t-[6px] flex items-center justify-center"><div class="w-[56px] border-t-[3px] border-dashed border-[#f0903c]"></div></div>
        <div class="absolute left-[2px] top-[646px] w-[29px] h-[63px] bg-[#f2f2f2] rounded-r-[6px] flex items-center justify-center"><div class="h-[56px] border-l-[3px] border-dashed border-[#f0903c]"></div></div>
        <div class="absolute left-[2322px] top-[646px] w-[21px] h-[63px] bg-[#f2f2f2] rounded-l-[6px] flex items-center justify-center"><div class="h-[56px] border-l-[3px] border-dashed border-[#9a9a9a]"></div></div>

        <!-- floating palette -->
        <div class="absolute left-[1741px] top-[42px] w-[372px] h-[1160px] bg-[#ececec] text-[22px] [&_button]:block [&_button]:w-[360px] [&_button]:ml-[6px] [&_button]:rounded-[10px] [&_button]:shadow-[0_1px_2px_rgba(0,0,0,0.3)] [&_button]:leading-[38px] [&_button]:whitespace-nowrap [&_button]:overflow-hidden">
          <div class="relative h-[32px] bg-gradient-to-b from-[#ececec] to-[#dedede] mx-[2px] flex items-center"><div class="size-[18px] rounded-full bg-[#ec6a5e] ml-[7px]"></div><span class="ml-[38px] whitespace-nowrap">Solid Element Operationen</span></div>
          <div class="mt-[8px] ml-[6px] w-[360px] h-[33px] rounded-t-[8px] bg-[#d4d4d4] flex items-center whitespace-nowrap pt-[11px]"><div class="w-0 h-0 border-x-[9px] border-x-transparent border-t-[11px] border-t-[#8f9396] ml-[11px] mr-[16px]"></div><span>Neue Solid-Elementbearbeit...</span></div>
          <button class="mt-[17px] h-[40px] bg-white text-[#2b2f33]">Als Ziel hinzufügen</button>
          <div class="relative mt-[13px] h-[52px] text-[#3c4043]">
            <svg class="absolute left-[12px] top-[3px] w-[56px] h-[44px]" viewBox="0 0 56 44"><g stroke="#9a9a9a"><path d="M4 26L16 16H55L38 28V36H4ZM4 28H40"/></g><path d="M1 5H28V42H1ZM1 5L7 1H31V37L28 42M28 5L31 1"/></svg>
            <span class="absolute left-[180px] top-[8px]">Ziele: 1</span>
            <div class="absolute left-[308px] top-0 w-[56px] h-[52px] bg-white rounded-[10px] shadow-[0_1px_2px_rgba(0,0,0,0.3)] flex items-center justify-center"><svg class="size-9" viewBox="0 0 36 36"><path d="M4 13L30 6L28 14M14 8L30 6M4 13L26 12M4 13V30M26 12V30M34 6V24" stroke-width="2"/><path d="M1 11h6v5H1zM11 5h6v5h-6zM24 10h6v5h-6zM31 3h5v5h-5z" fill="#2a3238"/></svg></div>
          </div>
          <button class="mt-[9px] h-[40px] bg-white text-[#2b2f33]">Als Operator hinzufügen</button>
          <div class="relative mt-[10px] h-[55px] text-[#3c4043]">
            <svg class="absolute left-[12px] top-[6px] w-[56px] h-[44px]" viewBox="0 0 56 44"><g stroke="#9a9a9a"><path d="M1 5H28V42H1ZM1 5L7 1H31V20"/></g><path d="M4 26L20 8H55L38 26V34H4ZM4 26H38M38 34L55 18V8" stroke-width="2.5"/></svg>
            <span class="absolute left-[112px] top-[10px]">Operatoren: 0</span>
            <div class="absolute left-[308px] top-0 w-[56px] h-[55px] bg-white rounded-[10px] shadow-[0_1px_2px_rgba(0,0,0,0.3)] flex items-center justify-center"><svg class="size-9" viewBox="0 0 36 36"><path d="M3 7H32M3 19H16M3 30H16M32 7L18 29M24 19H32" stroke-width="2"/><path d="M28 4h6v5h-6zM14 16h6v5h-6zM15 26h6v5h-6zM28 16h6v5h-6z" fill="#2a3238"/></svg></div>
          </div>
          <div class="mt-[12px] ml-[7px] h-[26px] leading-[26px] text-[#3c4043]">Operation auswählen:</div>
          <div class="mt-[12px] ml-[8px] w-[356px] h-[57px] bg-white rounded-[10px] shadow-[0_1px_2px_rgba(0,0,0,0.3)] flex items-center pl-[6px] pr-[8px] text-[#3c4043]"><svg class="w-[56px] h-[46px] mr-[9px]" viewBox="0 0 56 46"><g stroke="#9a9a9a"><path d="M5 28L17 16H55L38 28V36H5ZM5 28H38"/></g><path d="M1 6H30V16H15V24H30V44H1ZM1 6L7 1H32V14M30 44L32 40V30" stroke-width="2.5"/></svg><span>Abzug</span><svg class="w-[9px] h-[14px] ml-auto" viewBox="0 0 9 14"><path d="M2 2L7 7L2 12" stroke-width="2.5"/></svg></div>
          <div class="mt-[7px] ml-[7px] leading-[26px] text-[#3c4043]">Neues Oberflächenmaterial des<br>Ziels:</div>
          <div class="mt-[16px] ml-[6px] h-[28px] flex items-center whitespace-nowrap"><div class="size-[23px] rounded-full bg-white shadow-[0_0_1px_rgba(0,0,0,0.5)] mr-[10px]"></div>Vom Operator übernehmen</div>
          <div class="mt-[28px] ml-[6px] h-[28px] flex items-center whitespace-nowrap"><div class="size-[23px] rounded-full border-[7px] border-[#3f7ff0] bg-white mr-[10px]"></div>Eigene Attribute übernehmen</div>
          <button class="mt-[22px] h-[39px] bg-white text-[#2b2f33]">Ausführen</button>
          <div class="mt-[12px] ml-[6px] w-[360px] h-[44px] rounded-[8px] bg-[#d4d4d4] flex items-center whitespace-nowrap"><div class="w-0 h-0 border-x-[9px] border-x-transparent border-t-[11px] border-t-[#8f9396] ml-[11px] mr-[16px]"></div><span class="tracking-[-0.15px]">Elementbearbeitung bearbeit...</span></div>
          <div class="mt-[9px] ml-[7px] leading-[26px]">Zur Auswahl hinzufügen:</div>
          <button class="mt-[13px] h-[40px] bg-[#f6f6f6] text-[#bcbcbc]">Ziele hinzufügen</button>
          <button class="mt-[10px] h-[40px] bg-[#f6f6f6] text-[#bcbcbc]">Operatoren hinzufügen</button>
          <div class="mt-[17px] mx-[2px] h-[2px] bg-[#dcdcdc]"></div>
          <div class="mt-[12px] ml-[7px] leading-[26px]">Operationen löschen:</div>
          <button class="mt-[13px] h-[40px] bg-[#f6f6f6] text-[#bcbcbc]">Alle Ziele löschen</button>
          <button class="mt-[10px] h-[40px] bg-[#f6f6f6] text-[#bcbcbc]">Alle Operatoren löschen</button>
          <button class="mt-[10px] h-[40px] bg-[#f6f6f6] text-[#bcbcbc] text-left pl-[11px] pr-[10px]"><span class="block overflow-hidden">Gemeinsame Operationen löschen</span></button>
          <div class="mt-[17px] mx-[2px] h-[2px] bg-[#dcdcdc]"></div>
          <div class="mt-[12px] ml-[7px] leading-[26px]">Operationen fertig stellen:</div>
          <button class="mt-[13px] h-[41px] bg-[#f6f6f6] text-[#bcbcbc]">In Morphs konvertieren</button>
          <svg class="absolute left-[-6px] top-[75px] w-[388px] h-[65px]" viewBox="0 0 388 65"><rect x="4" y="4" width="380" height="57" stroke="#ee5cf0" stroke-width="8" filter="url(#rough)"/></svg>
        </div>
      </div>

      <!-- status bar -->
      <div class="h-[36px] flex bg-[#ebebeb] border-b-2 border-[#e4e4e4] text-[22px] whitespace-nowrap shrink-0 [&>section]:w-[192px] [&>section]:flex [&>section]:items-center [&>section]:border-r-2 [&>section]:border-[#d2d2d2] [&>section]:pl-[12px] [&>section]:pr-[14px]">
        <div class="w-[143px] flex items-center pl-[6px] gap-[20px] border-r-2 border-[#d2d2d2]">
          <svg class="size-7" viewBox="0 0 28 28"><g stroke="#a6a6a6"><circle cx="15" cy="12" r="9"/><path d="M8 19L3 27M2 12H12M6 8L2 12L6 16"/></g></svg>
          <svg class="size-7" viewBox="0 0 28 28"><g stroke="#a6a6a6"><circle cx="13" cy="12" r="9"/><path d="M20 19L25 27M16 12H26M22 8L26 12L22 16"/></g></svg>
          <svg class="size-7" viewBox="0 0 28 28"><circle cx="13" cy="12" r="9"/><path d="M20 19L26 27M13 8V16M9 12H17"/></svg>
        </div>
        <div class="w-[102px] flex items-center pl-[12px] gap-[22px] border-r-2 border-[#d2d2d2]">
          <svg class="size-7" viewBox="0 0 28 28"><path d="M11 21C5 20 3 15 5 10C8 4 19 4 23 10C26 16 20 21 15 21M14 15V25M12 20L15 24"/></svg>
          <svg class="w-[20px] h-[28px]" viewBox="0 0 20 28"><circle cx="10" cy="4" r="2" fill="#2a3238"/><path d="M10 8L5 14L10 13L12 20L15 27M10 13L7 20L5 27M10 9L15 15"/></svg>
        </div>
        <section class="!w-[191px]"><svg class="size-7 mr-[24px]" viewBox="0 0 28 28"><circle cx="13" cy="12" r="10"/><path d="M13 2V5M13 19V22M3 12H6M20 12H23M20 20L26 27M9 9h2v2H9zM15 9h2v2h-2zM9 14h2v2H9zM15 14h2v2h-2z"/></svg><span class="text-[#ababab]">keine D...</span><svg class="w-[9px] h-[14px] ml-auto" viewBox="0 0 9 14"><g stroke="#ababab"><path d="M2 2L7 7L2 12" stroke-width="2.5"/></g></svg></section>
        <section><svg class="size-7 mr-[24px]" viewBox="0 0 28 28"><g stroke="#a6a6a6"><path d="M10 2L19 12L10 22L2 12Z"/><path d="M18 28V14M14 18L18 14L22 18" stroke="#555"/></g></svg><span class="text-[#ababab]">keine D...</span><svg class="w-[9px] h-[14px] ml-auto" viewBox="0 0 9 14"><g stroke="#ababab"><path d="M2 2L7 7L2 12" stroke-width="2.5"/></g></svg></section>
        <section><svg class="size-7 mr-[43px]" viewBox="0 0 28 28"><path d="M1 6H27V24H1ZM1 6V9H27M7 24V19M13 24V19M19 24V19"/></svg><span>1:100</span><svg class="w-[9px] h-[14px] ml-auto" viewBox="0 0 9 14"><path d="M2 2L7 7L2 12" stroke-width="2.5"/></svg></section>
        <section><svg class="size-7 mr-[24px]" viewBox="0 0 28 28"><path d="M8 2H26L20 10H2ZM2 10L8 3M2 15L8 10H26L20 18H2ZM2 18V25H20L26 17"/></svg><span>00 Arbe...</span><svg class="w-[9px] h-[14px] ml-auto" viewBox="0 0 9 14"><path d="M2 2L7 7L2 12" stroke-width="2.5"/></svg></section>
        <section><svg class="size-7 mr-[24px]" viewBox="0 0 28 28"><rect x="2" y="2" width="24" height="24"/><path d="M2 6H26M2 22H26" stroke-width="3"/><path d="M8 20L14 8M14 20L20 8M20 20L25 10"/></svg><span>Komplet...</span><svg class="w-[9px] h-[14px] ml-auto" viewBox="0 0 9 14"><path d="M2 2L7 7L2 12" stroke-width="2.5"/></svg></section>
        <section><svg class="size-7 mr-[24px]" viewBox="0 0 28 28"><path d="M9 1V20L14 27L19 20V1M9 20H19"/></svg><span>04 S/W...</span><svg class="w-[9px] h-[14px] ml-auto" viewBox="0 0 9 14"><path d="M2 2L7 7L2 12" stroke-width="2.5"/></svg></section>
        <section><svg class="size-7 mr-[24px]" viewBox="0 0 28 28"><rect x="2" y="2" width="24" height="24" stroke-width="2.5"/><rect x="8" y="9" width="12" height="10"/></svg><span>00 Arbe...</span><svg class="w-[9px] h-[14px] ml-auto" viewBox="0 0 9 14"><path d="M2 2L7 7L2 12" stroke-width="2.5"/></svg></section>
        <section><svg class="size-7 mr-[24px]" viewBox="0 0 28 28"><rect x="16" y="13" width="11" height="14" fill="#8f9396"/><path d="M10 9H2V22H8M14 8C14 2 22 2 22 8M19 6L22 10L25 6"/></svg><span>Keine Ü...</span><svg class="w-[9px] h-[14px] ml-auto" viewBox="0 0 9 14"><path d="M2 2L7 7L2 12" stroke-width="2.5"/></svg></section>
        <section><svg class="size-7 mr-[24px]" viewBox="0 0 28 28"><path d="M12 1L22 18V27H14M14 27V18H19V27"/><path d="M12 3L2 25H14" stroke="#a0a0a0"/></svg><span>00 Rein...</span><svg class="w-[9px] h-[14px] ml-auto" viewBox="0 0 9 14"><path d="M2 2L7 7L2 12" stroke-width="2.5"/></svg></section>
        <section><svg class="size-7 mr-[17px]" viewBox="0 0 28 28"><path d="M2 12L13 2M6 18V12L14 4M10 27V14L18 10L27 14V27ZM14 27V20H17V27M20 20H24V24H20Z"/></svg><span>Individuell</span><svg class="w-[9px] h-[14px] ml-auto" viewBox="0 0 9 14"><path d="M2 2L7 7L2 12" stroke-width="2.5"/></svg></section>
        <section class="!w-[184px] !border-r-0 !pr-[8px]"><svg class="size-7 mr-[24px]" viewBox="0 0 28 28"><path d="M3 12H15V26H3ZM3 12L10 2H24L15 12M24 2V16L15 26"/></svg><span>Schattie...</span><svg class="w-[9px] h-[14px] ml-auto" viewBox="0 0 9 14"><path d="M2 2L7 7L2 12" stroke-width="2.5"/></svg></section>
      </div>
    </div>

    <!-- navigator -->
    <div class="relative w-[538px] shrink-0 bg-[#ececec] text-[22px]">
      <div class="absolute left-[199px] top-[9px] w-[140px] h-[3px] bg-[#b0b0b0]"></div>
      <div class="h-[57px] mt-[19px] flex items-center relative">
        <svg class="size-10 ml-[14px]" viewBox="0 0 40 40"><path d="M2 30V17L14 5L38 18V30ZM14 5L25 17H2M25 17V30M25 22H38"/></svg>
        <i class="w-[2px] h-[44px] bg-[#d6d6d6] ml-[24px]"></i>
        <div class="ml-[11px] w-[56px] h-[57px] rounded-[10px] bg-[#bcbcc1] flex items-center justify-center"><svg class="size-10" viewBox="0 0 40 40"><rect x="2" y="6" width="36" height="28" rx="2"/><path d="M7 29V20L16 11L33 20V29ZM16 11L21 20H7M21 20V29"/></svg></div>
        <svg class="size-10 ml-[12px]" viewBox="0 0 40 40"><path d="M2 34V18L10 4V32M10 4L18 10H38V34H2M26 26H38V34H26ZM26 30H38"/></svg>
        <svg class="size-10 ml-[21px]" viewBox="0 0 40 40"><rect x="4" y="5" width="26" height="26" rx="2"/><path d="M4 11H28M33 9V34H9M37 13V38H13"/></svg>
        <div class="absolute left-[465px] top-[5px] w-[66px] h-[44px] bg-white rounded-[10px] shadow-[0_1px_2px_rgba(0,0,0,0.3)] flex items-center justify-center gap-[10px]"><svg class="w-[24px] h-[16px]" viewBox="0 0 24 16"><path d="M0 1H24M0 8H24M0 15H24"/></svg><svg class="w-[9px] h-[14px]" viewBox="0 0 9 14"><path d="M2 2L7 7L2 12" stroke-width="2.5"/></svg></div>
      </div>
      <div class="mt-[13px] ml-[7px] w-[524px] h-[41px] bg-white shadow-[0_1px_1px_rgba(0,0,0,0.3)] flex items-center pl-[14px] text-[#bdbdbd]"><svg class="size-[28px] mr-[13px]" viewBox="0 0 28 28"><circle cx="12" cy="12" r="9"/><path d="M18 19L26 26"/></svg>Ausschnitt-Mappe durchsuchen</div>
      <div class="mt-[8px] ml-[1px] h-[508px] flex">
        <div class="w-[506px] h-[508px] bg-white overflow-hidden whitespace-nowrap [&>div]:flex [&>div]:items-center [&>div]:h-[48px] [&>div]:shrink-0">
          <div class="pl-[8px]"><svg class="w-[16px] h-[10px] mr-[14px]" viewBox="0 0 16 10"><g stroke="#8a8a8a"><path d="M1 1L8 8L15 1" stroke-width="2.5"/></g></svg><svg class="w-[36px] h-[28px] mr-[9px]" viewBox="0 0 36 28"><g stroke="#3f7ff0"><rect x="1" y="1" width="34" height="26" rx="1"/><path d="M5 23V14L14 6L31 14V23ZM14 6L20 14H5M20 14V23"/></g></svg>BRI-Dachgeschoss-Morph</div>
          <div class="pl-[36px]"><svg class="w-[16px] h-[10px] mr-[14px]" viewBox="0 0 16 10"><g stroke="#8a8a8a"><path d="M1 1L8 8L15 1" stroke-width="2.5"/></g></svg><svg class="w-[36px] h-[30px] mr-[9px]" viewBox="0 0 36 30"><path d="M1 29V1H14L18 7H35V29ZM1 7H18" fill="#f4f4f4"/></svg>Beispielausschnitte</div>
          <div class="pl-[64px]"><svg class="w-[16px] h-[10px] mr-[14px]" viewBox="0 0 16 10"><g stroke="#8a8a8a"><path d="M1 1L8 8L15 1" stroke-width="2.5"/></g></svg><svg class="w-[36px] h-[30px] mr-[9px]" viewBox="0 0 36 30"><path d="M1 29V1H14L18 7H35V29ZM1 7H18" fill="#f4f4f4"/></svg>Arbeitseinstellung</div>
          <div class="pl-[92px]"><svg class="w-[16px] h-[10px] mr-[14px]" viewBox="0 0 16 10"><g stroke="#8a8a8a"><path d="M1 1L8 8L15 1" stroke-width="2.5"/></g></svg><svg class="w-[36px] h-[32px] mr-[9px]" viewBox="0 0 36 32"><path d="M1 1H18V12H35V28H1Z" fill="#e6f1ff" stroke="#3f7ff0"/><path d="M7 1V8L12 4" stroke="#3f7ff0"/><path d="M9 20C4 22 3 26 3 30" stroke-width="5" stroke="#2a3238"/></svg>Geschosse</div>
          <div class="pl-[150px]"><svg class="w-[36px] h-[30px] mr-[8px]" viewBox="0 0 36 30"><g stroke="#3f7ff0"><path d="M1 1H18V12H35V29H1Z"/><path d="M7 1V8L12 4"/></g></svg>1. OG</div>
          <div class="pl-[150px]"><svg class="w-[36px] h-[30px] mr-[8px]" viewBox="0 0 36 30"><g stroke="#3f7ff0"><path d="M1 1H18V12H35V29H1Z"/><path d="M7 1V8L12 4"/></g></svg>0. EG</div>
          <div class="pl-[150px]"><svg class="w-[36px] h-[30px] mr-[8px]" viewBox="0 0 36 30"><g stroke="#3f7ff0"><path d="M1 1H18V12H35V29H1Z"/><path d="M7 1V8L12 4"/></g></svg>-1. UG</div>
          <div class="pl-[122px] bg-[#d9d9d9] font-bold"><svg class="w-[36px] h-[34px] mr-[9px]" viewBox="0 0 36 34"><g stroke="#3f7ff0"><path d="M2 6L22 1V33L2 27ZM22 1L33 7V24L22 33"/></g></svg>Allgemeine Perspektive</div>
          <div class="pl-[122px]"><svg class="w-[36px] h-[32px] mr-[9px]" viewBox="0 0 36 32"><path d="M1 9L18 1L35 9V26H4V9ZM1 9H35" fill="#e6f1ff" stroke="#3f7ff0"/><path d="M9 18C4 20 3 24 3 30" stroke-width="5" stroke="#2a3238"/></svg>Ansichten</div>
          <div class="pl-[95px]"><svg class="w-[12px] h-[16px] mr-[15px]" viewBox="0 0 12 16"><g stroke="#8a8a8a"><path d="M2 1L10 8L2 15" stroke-width="2.5"/></g></svg><svg class="w-[36px] h-[32px] mr-[9px]" viewBox="0 0 36 32"><path d="M1 9L18 1L35 9V26H4V9ZM1 9H35" fill="#e6f1ff" stroke="#3f7ff0"/><path d="M9 18C4 20 3 24 3 30" stroke-width="5" stroke="#2a3238"/></svg>Schnitte</div>
          <div class="pl-[122px]"><svg class="w-[36px] h-[32px] mr-[9px]" viewBox="0 0 36 32"><g stroke="#3f7ff0"><path d="M1 1H35V28H1ZM7 10H16V28M21 8H29V16H21Z"/></g></svg>Innenansichten</div>
        </div>
        <div class="w-[30px] bg-[#ececec]"><div class="ml-[7px] mt-[7px] w-[16px] h-[197px] rounded-[8px] bg-[#c2c2c2]"></div></div>
      </div>
      <div class="h-[66px] flex items-center pl-[13px] [&>svg]:w-[44px] [&>svg]:h-[40px] [&>svg]:mr-[16px]">
        <svg viewBox="0 0 44 40"><rect x="2" y="14" width="30" height="22" rx="2"/><path d="M7 32V24L14 18L27 24V32ZM14 18L18 24H7"/><circle cx="32" cy="12" r="9" stroke="#3f7ff0" fill="#ececec"/><path d="M32 7V17M27 12H37" stroke="#3f7ff0"/></svg>
        <svg viewBox="0 0 44 40"><path d="M8 28V14H34V36H12" /><path d="M10 28V24L18 18L28 24V32H16"/><path d="M8 26C3 28 2 32 3 38" stroke-width="5"/><circle cx="33" cy="12" r="9" stroke="#3f7ff0" fill="#ececec"/><path d="M33 7V17M28 12H38" stroke="#3f7ff0"/></svg>
        <svg viewBox="0 0 44 40"><path d="M2 36V16L12 12H20L24 16H32V36ZM2 20H24"/><circle cx="32" cy="12" r="9" stroke="#3f7ff0" fill="#ececec"/><path d="M32 7V17M27 12H37" stroke="#3f7ff0"/></svg>
        <svg viewBox="0 0 44 40"><g stroke="#3f7ff0"><rect x="8" y="8" width="28" height="22" rx="1" fill="#e6f1ff"/><path d="M13 16H15M13 23H15M19 16H31M19 23H31"/></g></svg>
        <svg viewBox="0 0 44 40"><g stroke="#e8482a"><path d="M8 7L34 33M34 7L8 33" stroke-width="3.5"/></g></svg>
      </div>
      <div class="ml-[5px] w-[528px] h-[43px] mt-[2px] rounded-[8px] bg-[#d4d4d4] flex items-center"><div class="w-0 h-0 border-x-[9px] border-x-transparent border-t-[11px] border-t-[#8f9396] ml-[11px] mr-[16px]"></div><span class="tracking-[0.3px]">Beschreibungen</span></div>
      <div class="mt-[8px] h-[33px] flex items-center">
        <svg class="w-[24px] h-[24px] ml-[10px]" viewBox="0 0 24 24"><g stroke="#3f7ff0"><path d="M1 3L16 1V23L1 20ZM16 1L22 4V19L16 23"/></g></svg>
        <div class="ml-[12px] w-[97px] h-[33px] bg-white shadow-[0_1px_1px_rgba(0,0,0,0.3)]"></div>
        <div class="ml-[10px] w-[378px] h-[33px] bg-white shadow-[0_1px_1px_rgba(0,0,0,0.3)] pl-[7px] leading-[32px]">Allgemeine Perspektive</div>
      </div>
      <div class="mt-[3px] h-[42px] flex items-center"><svg class="w-[30px] h-[24px] ml-[6px] mr-[10px]" viewBox="0 0 30 24"><path d="M8 2H29L22 9H2ZM2 9L8 3M2 14L8 9M2 14H22L29 8M2 19L8 14M2 19H22L29 13"/></svg>00 Arbeitseinstellung</div>
      <div class="h-[42px] flex items-center"><svg class="w-[30px] h-[16px] ml-[6px] mr-[10px]" viewBox="0 0 30 16"><path d="M1 2H29V14H1ZM7 14V10M13 14V10M19 14V10M25 14V10"/></svg>1:100</div>
      <div class="h-[42px] flex items-center"><svg class="w-[30px] h-[26px] ml-[6px] mr-[10px]" viewBox="0 0 30 26"><path d="M1 6H8L10 2H20L22 6H29V25H1Z"/><ellipse cx="15" cy="15" rx="8" ry="6"/></svg>3D-Fenster</div>
      <div class="ml-[5px] mt-[5px] w-[528px] h-[40px] bg-white rounded-[10px] shadow-[0_1px_2px_rgba(0,0,0,0.3)] text-center leading-[38px]">Einstellungen...</div>
      <div class="mt-[7px] h-[2px] bg-[#e0e0e0]"></div>
      <div class="mt-[8px] ml-[199px] w-[140px] h-[2px] bg-[#a8a8a8]"></div>
      <div class="mt-[9px] ml-[7px] flex gap-[4px]">
        <div class="w-[56px] h-[57px] rounded-[10px] bg-[#f6f6f6] shadow-[0_1px_1px_rgba(0,0,0,0.15)] flex items-center justify-center"><svg class="size-9" viewBox="0 0 36 36"><rect x="1" y="2" width="28" height="28" rx="2" stroke="#a8a8a8" stroke-width="2.5"/><path d="M6 24V7H24" stroke="#c0c0c0"/><path d="M34 9V34H9" stroke="#b9d0f7"/></svg></div>
        <div class="w-[464px] h-[57px] rounded-[10px] bg-[#f6f6f6] shadow-[0_1px_1px_rgba(0,0,0,0.15)] flex items-center justify-end pr-[9px]"><svg class="w-[9px] h-[14px]" viewBox="0 0 9 14"><g stroke="#a8a8a8"><path d="M2 2L7 7L2 12" stroke-width="2.5"/></g></svg></div>
      </div>
      <div class="h-[72px] relative [&>svg]:absolute [&>svg]:top-[15px] [&>svg]:size-10">
        <svg class="left-[15px]" viewBox="0 0 40 40"><g stroke="#9a9a9a"><path d="M24 24V4H2V24H24ZM6 8L20 20M6 14V8H12M20 14V20H14"/></g><path d="M26 18H38V38H16V26" stroke="#a8c4f4"/></svg>
        <svg class="left-[136px]" viewBox="0 0 40 40"><path d="M16 26H2V6H28V16" stroke="#a8c4f4"/><g stroke="#9a9a9a"><path d="M26 18V38M16 28H38M22 22L26 18L30 22M22 34L26 38L30 34M20 24L16 28L20 32M34 24L38 28L34 32"/></g></svg>
        <svg class="left-[195px]" viewBox="0 0 40 40"><path d="M2 14L20 5L30 24L10 30Z" stroke="#a8c4f4"/><g stroke="#9a9a9a"><path d="M38 20C36 28 28 30 20 29M24 25L20 29L24 33M34 18L38 20"/></g></svg>
        <svg class="left-[255px]" viewBox="0 0 40 40"><path d="M20 26H2V6H28" stroke="#a8c4f4"/><path d="M20 16H36V32H14" stroke="#a8c4f4"/><g stroke="#9a9a9a"><path d="M32 22C30 14 22 12 16 14M20 10L16 14L20 18"/></g></svg>
        <svg class="left-[315px]" viewBox="0 0 40 40"><g stroke="#9a9a9a"><circle cx="20" cy="20" r="17"/><path d="M8 16C12 8 24 6 30 14M26 15L31 15L31 10M32 24C28 32 16 34 10 26M14 25L9 25L9 30"/></g></svg>
      </div>
      <div class="h-[2px] bg-[#dcdcdc]"></div>
      <div class="mt-[17px] ml-[6px] text-[#8f8f8f] leading-[26px]">Transparentpause:</div>
      <div class="relative h-[56px] mt-[12px]">
        <div class="absolute left-[7px] top-0 w-[56px] h-[56px] rounded-[10px] bg-[#f6f6f6] shadow-[0_1px_1px_rgba(0,0,0,0.15)] flex items-center pl-[6px] gap-[8px]"><div class="w-[24px] h-[24px] bg-[#f29c90]"></div><svg class="w-[9px] h-[14px]" viewBox="0 0 9 14"><g stroke="#a8a8a8"><path d="M2 2L7 7L2 12" stroke-width="2.5"/></g></svg></div>
        <div class="absolute left-[71px] top-[18px] w-[428px] h-[9px] bg-[#e3e3e3] flex justify-between pr-[18px]"><i class="w-[4px] h-[13px] -mt-[2px] bg-[#dcdcdc]"></i><i class="w-[4px] h-[13px] -mt-[2px] bg-[#dcdcdc]"></i><i class="w-[4px] h-[13px] -mt-[2px] bg-[#dcdcdc]"></i><i class="w-[4px] h-[13px] -mt-[2px] bg-[#dcdcdc]"></i><i class="w-[4px] h-[13px] -mt-[2px] bg-[#dcdcdc]"></i><i class="w-[4px] h-[13px] -mt-[2px] bg-[#dcdcdc]"></i><i class="w-[4px] h-[13px] -mt-[2px] bg-[#dcdcdc]"></i><i class="w-[4px] h-[13px] -mt-[2px] bg-[#dcdcdc]"></i><i class="w-[4px] h-[13px] -mt-[2px] bg-[#dcdcdc]"></i><i class="w-[4px] h-[13px] -mt-[2px] bg-[#dcdcdc]"></i><i class="w-[4px] h-[13px] -mt-[2px] bg-[#dcdcdc]"></i></div>
        <div class="absolute left-[483px] top-[6px] w-[16px] h-[32px] rounded-[6px] bg-[#f6f6f6] shadow-[0_1px_1px_rgba(0,0,0,0.2)]"></div>
        <div class="absolute left-[505px] top-0 w-[26px] h-[56px] rounded-[8px] bg-[#f6f6f6] shadow-[0_1px_1px_rgba(0,0,0,0.15)] flex items-center justify-center"><svg class="w-[9px] h-[14px]" viewBox="0 0 9 14"><g stroke="#a8a8a8"><path d="M2 2L7 7L2 12" stroke-width="2.5"/></g></svg></div>
      </div>
      <div class="mt-[13px] ml-[6px] text-[#8f8f8f] leading-[26px]">Aktiv:</div>
      <div class="relative h-[56px] mt-[12px]">
        <div class="absolute left-[7px] top-0 w-[56px] h-[56px] rounded-[10px] bg-[#f6f6f6] shadow-[0_1px_1px_rgba(0,0,0,0.15)] flex items-center pl-[4px] gap-[8px]"><svg class="size-[26px]" viewBox="0 0 26 26"><path d="M13 13V2A12 11 0 0 0 2 17Z" fill="#9ccb96" stroke="none"/><path d="M13 13V2A12 11 0 0 1 24 17Z" fill="#ec9a8c" stroke="none"/><path d="M13 13L2 17A12 11 0 0 0 24 17Z" fill="#9bb8ec" stroke="none"/><ellipse cx="13" cy="13" rx="12" ry="11" stroke="#888"/></svg><svg class="w-[9px] h-[14px]" viewBox="0 0 9 14"><g stroke="#a8a8a8"><path d="M2 2L7 7L2 12" stroke-width="2.5"/></g></svg></div>
        <div class="absolute left-[71px] top-[18px] w-[428px] h-[9px] bg-[#e3e3e3] flex justify-between pr-[18px]"><i class="w-[4px] h-[13px] -mt-[2px] bg-[#dcdcdc]"></i><i class="w-[4px] h-[13px] -mt-[2px] bg-[#dcdcdc]"></i><i class="w-[4px] h-[13px] -mt-[2px] bg-[#dcdcdc]"></i><i class="w-[4px] h-[13px] -mt-[2px] bg-[#dcdcdc]"></i><i class="w-[4px] h-[13px] -mt-[2px] bg-[#dcdcdc]"></i><i class="w-[4px] h-[13px] -mt-[2px] bg-[#dcdcdc]"></i><i class="w-[4px] h-[13px] -mt-[2px] bg-[#dcdcdc]"></i><i class="w-[4px] h-[13px] -mt-[2px] bg-[#dcdcdc]"></i><i class="w-[4px] h-[13px] -mt-[2px] bg-[#dcdcdc]"></i><i class="w-[4px] h-[13px] -mt-[2px] bg-[#dcdcdc]"></i><i class="w-[4px] h-[13px] -mt-[2px] bg-[#dcdcdc]"></i></div>
        <div class="absolute left-[483px] top-[6px] w-[16px] h-[32px] rounded-[6px] bg-[#f6f6f6] shadow-[0_1px_1px_rgba(0,0,0,0.2)]"></div>
      </div>
      <div class="mt-[15px] h-[2px] bg-[#dcdcdc]"></div>
      <div class="h-[72px] relative [&>svg]:absolute [&>svg]:top-[19px] [&>svg]:size-10">
        <svg class="left-[76px]" viewBox="0 0 40 40"><path d="M20 22H3V4H30V14" stroke="#a8c4f4"/><g stroke="#9a9a9a"><path d="M18 36L12 28C10 25 14 23 16 26L20 30V14C20 11 24 11 24 14V24M24 14C24 11 28 11 28 14V24M28 16C28 13 32 13 32 16V24M32 20C32 17 36 17 36 20C36 28 34 32 33 38"/></g></svg>
        <svg class="left-[136px]" viewBox="0 0 40 40"><path d="M18 26H3V7H26V16" stroke="#a8a8a8"/><path d="M14 16H36V36H14Z" stroke="#a8c4f4"/><g stroke="#9a9a9a"><path d="M26 20V28H20"/></g></svg>
        <svg class="left-[196px]" viewBox="0 0 40 40"><path d="M18 6H2V32H18M12 14L6 19L12 24" stroke="#a0a0a0"/><path d="M22 8H38V34H22M28 14L34 19L28 24" stroke="#a8c4f4"/><path d="M20 2V38" stroke="#a8c4f4"/></svg>
        <svg class="left-[258px]" viewBox="0 0 40 40"><g stroke="#a0a0a0"><path d="M3 3H30V24H3ZM3 12L12 3M3 20L20 3M12 24L30 6M22 24L30 15"/><ellipse cx="28" cy="30" rx="11" ry="5"/><path d="M14 38L38 24"/></g></svg>
      </div>
    </div>
  </div>

  <!-- bottom bar -->
  <div class="flex-1 bg-[#ebebeb] border-t-2 border-[#e2e2e2] flex items-center justify-end pr-[22px] pb-[8px]">
    <svg class="w-[34px] h-[30px]" viewBox="0 0 34 30"><path d="M6 26H1V3H28V7"/><rect x="7" y="9" width="26" height="19" stroke-width="2.5"/><path d="M7 13H33" stroke-width="3"/></svg>
    <i class="w-[2px] h-[30px] bg-[#8f8f8f] ml-[20px] mr-[22px]"></i>
    <span class="text-[27px] tracking-[-0.4px] text-[#383e42]">GRAPHISOFT <span class="font-light">ID</span></span>
  </div>
</div>
</body>
</html>
